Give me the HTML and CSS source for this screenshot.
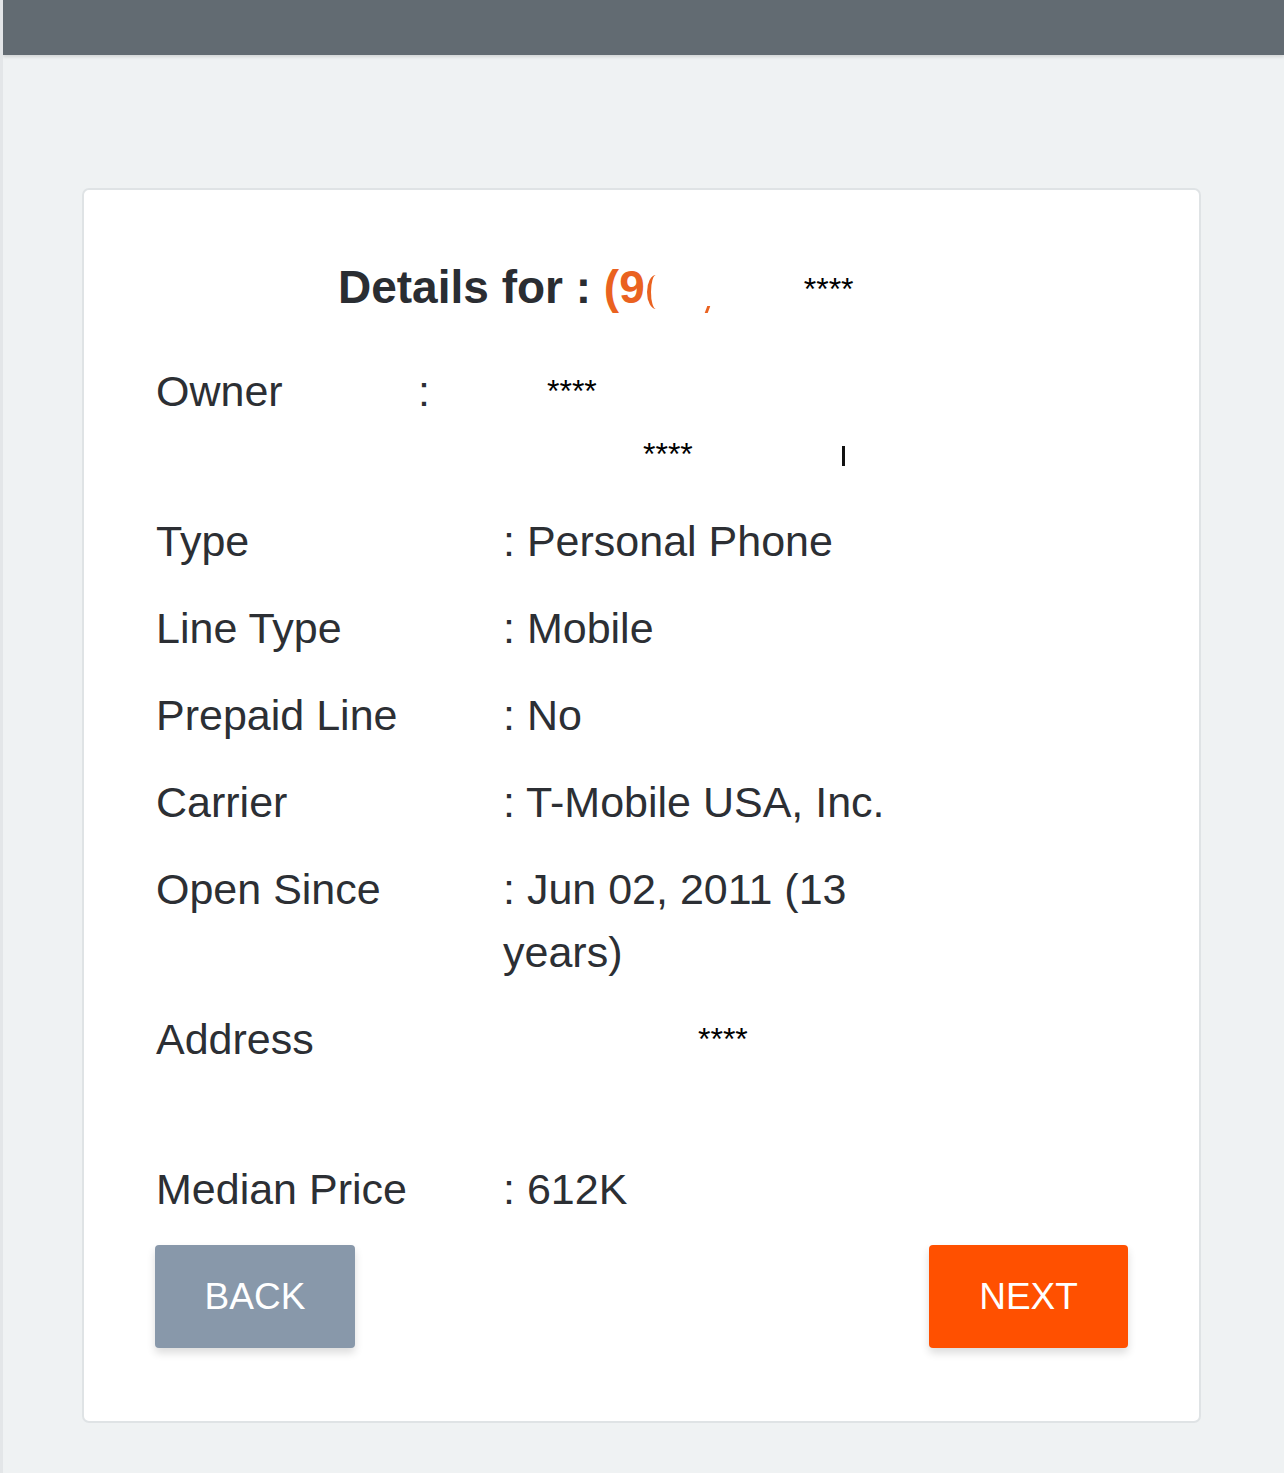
FILE: index.html
```html
<!doctype html>
<html lang="en">
<head>
	<meta charset="UTF-8">
	<title>Details</title>
	<link rel="stylesheet" href="styles.css">
</head>
<body>
	<!-- top bar -->
	<div class="topbar"></div>

	<div class="page">
		<div class="card">
			<h2 class="title">Details for : <span class="phone">(9</span><span class="cut"></span><span class="tick"></span><span class="stars title-stars">****</span></h2>

			<div class="owner">
				<div class="owner-label">Owner</div>
				<div class="owner-colon">:</div>
				<div class="owner-value">
					<div class="line"><span class="stars owner-stars1">****</span></div>
					<div class="line"><span class="stars owner-stars2">****</span><span class="bar"></span></div>
				</div>
			</div>

			<div class="row">
				<div class="label">Type</div>
				<div class="value">: Personal Phone</div>
			</div>
			<div class="row">
				<div class="label">Line Type</div>
				<div class="value">: Mobile</div>
			</div>
			<div class="row">
				<div class="label">Prepaid Line</div>
				<div class="value">: No</div>
			</div>
			<div class="row">
				<div class="label">Carrier</div>
				<div class="value">: T-Mobile USA, Inc.</div>
			</div>
			<div class="row">
				<div class="label">Open Since</div>
				<div class="value narrow">: Jun 02, 2011 (13 years)</div>
			</div>
			<div class="row">
				<div class="label">Address</div>
				<div class="value">
					<div class="line"><span class="stars addr-stars">****</span></div>
					<div class="line"></div>
				</div>
			</div>
			<div class="row">
				<div class="label">Median Price</div>
				<div class="value">: 612K</div>
			</div>

			<div class="buttons">
				<a href="#" class="btn btn-back">BACK</a>
				<a href="#" class="btn btn-next">NEXT</a>
			</div>
		</div>
	</div>
</body>
</html>
```

FILE: styles.css
```css
* {
	margin: 0px;
	padding: 0px;
	box-sizing: border-box;
}

body {
	background: #eff2f3;
	font-family: "Liberation Sans", Arial, sans-serif;
	color: #2c2f34;
	border-left: 3px solid #e3e6e8;
	min-height: 1473px;
}

a {
	text-decoration: none;
}

.topbar {
	height: 55px;
	background: #626b72;
	box-shadow: 0 2px 3px rgba(0,0,0,0.12);
}

.page {
	padding: 133px 83px 0 79px;
}

.card {
	background: #fff;
	border: 2px solid #dfe3e5;
	border-radius: 7px;
	padding: 66px 71px 73px 72px;
}

.title {
	font-size: 46px;
	font-weight: 700;
	line-height: 63px;
	color: #2a2d32;
	padding-left: 182px;
	white-space: nowrap;
	margin-bottom: 39px;
}

.phone {
	color: #ea6220;
}

/* half-hidden bracket of the masked number */
.cut {
	display: inline-block;
	width: 9px;
	height: 34px;
	border-left: 4px solid #ea6220;
	border-radius: 100% 0 0 100% / 50% 0 0 50%;
	vertical-align: -6px;
	margin-left: 2px;
}

.tick {
	display: inline-block;
	width: 3px;
	height: 7px;
	background: #ea6220;
	transform: skewX(-20deg);
	margin-left: 50px;
	vertical-align: -10px;
}

.stars {
	font-size: 32px;
	font-weight: 400;
	color: #000;
}

.title-stars {
	margin-left: 95px;
	vertical-align: 3px;
}

.owner {
	display: flex;
	font-size: 43px;
	line-height: 63px;
	margin-bottom: 24px;
}

.owner-label {
	width: 262px;
}

.owner-colon {
	width: 14px;
}

.owner-value .line {
	height: 63px;
}

.owner-stars1 {
	margin-left: 115px;
	vertical-align: 5px;
}

.owner-stars2 {
	margin-left: 211px;
	vertical-align: 5px;
}

.bar {
	display: inline-block;
	width: 3px;
	height: 20px;
	background: #111;
	margin-left: 149px;
	vertical-align: 4px;
}

.row {
	display: flex;
	font-size: 43px;
	line-height: 63px;
	margin-bottom: 24px;
}

.label {
	width: 347px;
	flex-shrink: 0;
}

.value .line {
	height: 63px;
}

.narrow {
	width: 370px;
}

.addr-stars {
	margin-left: 195px;
	vertical-align: 17px;
}

.buttons {
	display: flex;
	justify-content: space-between;
	margin-top: 1px;
}

.btn {
	display: block;
	width: 200px;
	height: 103px;
	line-height: 103px;
	text-align: center;
	color: #fff;
	font-size: 37px;
	border-radius: 4px;
	box-shadow: 0 5px 9px rgba(0,0,0,0.14);
}

.btn-back {
	background: #8898aa;
	margin-left: -1px;
}

.btn-next {
	background: #ff5000;
	width: 199px;
}
```
